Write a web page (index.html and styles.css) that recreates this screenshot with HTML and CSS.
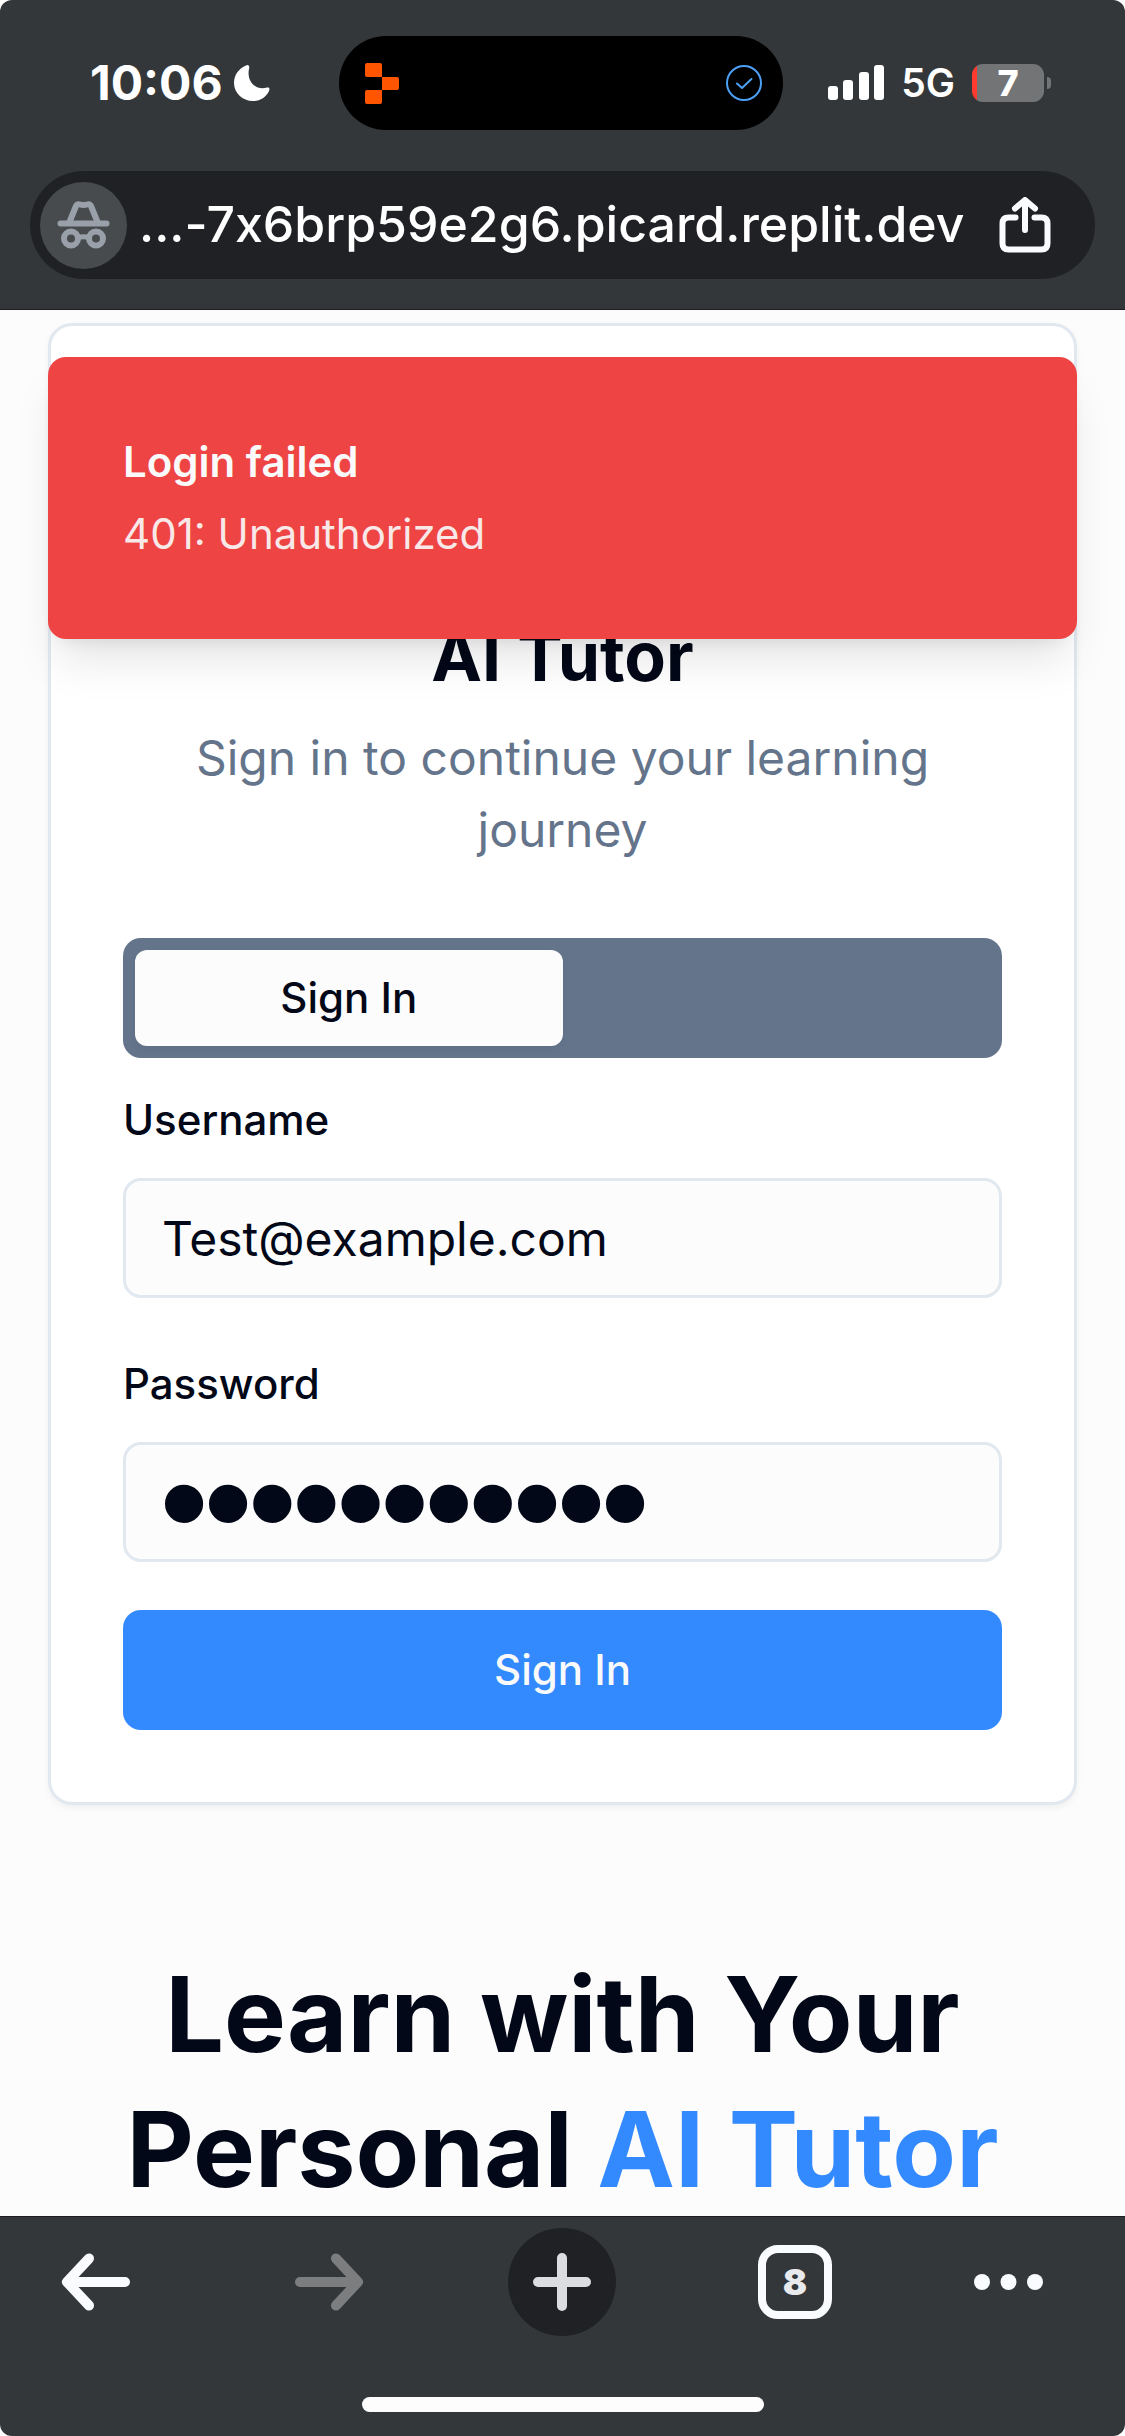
FILE: index.html
```html
<!DOCTYPE html>
<html lang="en">
<head>
  <meta charset="utf-8">
  <meta name="viewport" content="width=device-width, initial-scale=1">
  <title>AI Tutor</title>
  <link rel="stylesheet" href="styles.css">
</head>
<body>
  <header class="browser-top">
    <div class="status">
      <div class="status-left">
        <span class="clock">10:06</span>
        <svg class="moon" viewBox="0 0 36 36" aria-hidden="true"><path d="M12 .6Q14-.6 15 1.2 15.600 2 15 4C12.600 14.500 20 26 33 22.600 35.600 22 35.800 23.600 35 26 32 32.400 26 36 19 36 8.500 36 0 28 0 18 0 9.800 5 3.600 12 .6Z"/></svg>
      </div>
      <div class="island">
        <svg class="replit" viewBox="0 0 34 41" aria-hidden="true"><path d="M2 0h13q2 0 2 2v12H2q-2 0-2-2V2q0-2 2-2zM17 14h15q2 0 2 2v9q0 2-2 2H17zM2 27h15v12q0 2-2 2H2q-2 0-2-2V29q0-2 2-2z"/></svg>
        <svg class="check" viewBox="0 0 38 38" aria-hidden="true"><circle cx="19" cy="19" r="17"/><path d="M12 19.500l5 4.500 9.500-9"/></svg>
      </div>
      <div class="status-right">
        <svg class="signal" viewBox="0 0 56 36" aria-hidden="true"><rect x="0" y="21" width="10" height="14" rx="3"/><rect x="15" y="15" width="10" height="20" rx="3"/><rect x="31" y="7" width="10" height="28" rx="3"/><rect x="46" y="0" width="10" height="35" rx="3"/></svg>
        <span class="network">5G</span>
        <span class="battery">7</span>
      </div>
    </div>
    <div class="address">
      <span class="incognito">
        <svg viewBox="0 0 54 48" aria-hidden="true"><path class="hat" d="M12.500 21l6.500-16q1.200-2.500 4-1.500 3.500 1.200 7 0 2.800-1 4 1.500l6.500 16"/><path class="brim" d="M3.500 22.500h46"/><circle cx="14" cy="37.500" r="7"/><circle cx="39" cy="37.500" r="7"/><path class="bridge" d="M21 37q5.500-2.500 11 0"/></svg>
      </span>
      <input class="url" type="text" aria-label="Address" value="...-7x6brp59e2g6.picard.replit.dev">
      <button class="share" type="button" aria-label="Share">
        <svg viewBox="0 0 52 57" aria-hidden="true"><path d="M16.500 20.500H9.500Q3.500 20.500 3.500 26.500v20q0 6 6 6h33q6 0 6-6v-20q0-6-6-6h-7M26 33V5M16 11.500L26 3l10 8.500"/></svg>
      </button>
    </div>
  </header>

  <main class="page">
    <div class="toast" role="alert">
      <p class="toast-title">Login failed</p>
      <p class="toast-text">401: Unauthorized</p>
    </div>
    <section class="card">
      <h2 class="card-title">AI Tutor</h2>
      <p class="card-text">Sign in to continue your learning journey</p>
      <div class="tabs" role="tablist">
        <button class="tab tab-active" type="button" role="tab" aria-selected="true">Sign In</button>
        <button class="tab" type="button" role="tab" aria-selected="false" aria-label="Register"></button>
      </div>
      <form class="form">
        <div class="field">
          <div class="label-row"><label for="username">Username</label></div>
          <input class="input" id="username" type="text" value="Test@example.com">
        </div>
        <div class="field">
          <div class="label-row"><label for="password">Password</label></div>
          <input class="input input-password" id="password" type="password" value="abcdefghijk">
        </div>
        <button class="submit" type="button">Sign In</button>
      </form>
    </section>
    <h1 class="hero">Learn with Your Personal <span class="accent">AI Tutor</span></h1>
  </main>

  <footer class="browser-bottom">
    <nav class="toolbar" aria-label="Browser">
      <button class="tool" type="button" aria-label="Back"><svg width="70" height="58" viewBox="0 0 70 58"><path d="M28 5.500L6 29l22 23.500M64 29H8"/></svg></button>
      <button class="tool tool-off" type="button" aria-label="Forward"><svg width="70" height="58" viewBox="0 0 70 58"><path d="M42 5.500L64 29 42 52.500M6 29h56"/></svg></button>
      <button class="tool tool-new" type="button" aria-label="New tab"><svg width="58" height="58" viewBox="0 0 58 58"><path d="M29 5v48M5 29h48"/></svg></button>
      <button class="tool" type="button" aria-label="Tabs"><span class="tab-count">8</span></button>
      <button class="tool tool-more" type="button" aria-label="More"><svg width="69" height="16" viewBox="0 0 69 16"><circle cx="8" cy="8" r="8"/><circle cx="34.500" cy="8" r="8"/><circle cx="61" cy="8" r="8"/></svg></button>
    </nav>
    <div class="home-bar"></div>
  </footer>
</body>
</html>
```
FILE: styles.css
```css
* { box-sizing: border-box; margin: 0; }

html { background: #fff; }

body {
  display: flex;
  flex-direction: column;
  height: 100vh;
  overflow: hidden;
  border-radius: 12px;
  background: #fcfcfc;
  color: #020817;
  font-family: Inter, "Liberation Sans", sans-serif;
  font-size: 48px;
  line-height: 72px;
}

button, input { font: inherit; color: inherit; border: 0; padding: 0; background: none; }
svg { display: block; }

/* Browser chrome, top */
.browser-top {
  background: #343739;
  color: #fff;
  padding: 36px 30px 30px;
  border-bottom: 1px solid #1e1c20;
}
.status {
  display: grid;
  grid-template-columns: 1fr 444px 1fr;
  align-items: center;
  height: 94px;
  margin-bottom: 41px;
  padding-right: 4px;
}
.status-left { display: flex; align-items: center; gap: 11px; padding-left: 60px; }
.clock { font-size: 48px; font-weight: 700; }
.moon { width: 36px; height: 36px; fill: #fff; }
.island {
  display: flex;
  align-items: center;
  justify-content: space-between;
  height: 94px;
  padding: 0 20px 0 26px;
  border-radius: 47px;
  background: #000;
}
.replit { width: 34px; height: 41px; fill: #ff5500; }
.check { width: 38px; height: 38px; fill: none; stroke: #4ba0f5; stroke-width: 2; stroke-linecap: round; stroke-linejoin: round; }
.status-right { display: flex; align-items: center; justify-content: flex-end; gap: 17px; padding-right: 47px; }
.signal { width: 56px; height: 36px; fill: #fff; }
.network { font-size: 39px; font-weight: 600; }
.battery {
  position: relative;
  width: 72px;
  height: 38px;
  border-radius: 11px;
  background: linear-gradient(90deg, #ff3b30 5px, #737476 5px);
  font-size: 36px;
  font-weight: 800;
  line-height: 38px;
  text-align: center;
}
.battery::after {
  content: "";
  position: absolute;
  top: 13px;
  right: -7px;
  width: 4px;
  height: 12px;
  border-radius: 0 4px 4px 0;
  background: #737476;
}

.address {
  display: flex;
  align-items: center;
  height: 108px;
  padding: 0 44px 0 10px;
  border-radius: 54px;
  background: #202124;
}
.incognito {
  display: flex;
  flex: none;
  align-items: center;
  justify-content: center;
  width: 87px;
  height: 87px;
  border-radius: 50%;
  background: #474b4e;
}
.incognito svg { width: 54px; height: 48px; fill: none; stroke: #9aa0a9; stroke-width: 6; stroke-linecap: round; stroke-linejoin: round; }
.incognito .bridge { stroke-width: 5; }
.url {
  flex: 1;
  min-width: 0;
  margin-left: 12px;
  padding-bottom: 3px;
  font-size: 50px;
  font-weight: 500;
  font-variant-ligatures: no-contextual;
  outline: 0;
}
.share { flex: none; }
.share svg { width: 52px; height: 57px; fill: none; stroke: #fafbff; stroke-width: 6; stroke-linecap: round; stroke-linejoin: round; }

/* Page */
.page {
  position: relative;
  flex: 1;
  min-height: 0;
  overflow: hidden;
  padding: 13px 48px 0;
}
.toast {
  position: absolute;
  top: 47px;
  left: 48px;
  right: 48px;
  z-index: 1;
  display: grid;
  gap: 12px;
  padding: 75px;
  border-radius: 18px;
  background: #ef4444;
  color: #fafafa;
  font-size: 42px;
  line-height: 60px;
  box-shadow: 0 30px 45px -9px rgba(0, 0, 0, .1), 0 12px 18px -12px rgba(0, 0, 0, .1);
}
.toast-title { font-weight: 600; }
.toast-text { opacity: .9; }

.card {
  padding: 282px 72px 72px;
  border: 3px solid #e2e8f0;
  border-radius: 24px;
  background: #fff;
  box-shadow: 0 3px 6px rgba(0, 0, 0, .05);
}
.card-title { margin-bottom: 18px; font-size: 68px; font-weight: 700; line-height: 96px; text-align: center; }
.card-text { margin-bottom: 72px; color: #64748b; text-align: center; }

.tabs {
  display: grid;
  grid-template-columns: 1fr 1fr;
  height: 120px;
  padding: 12px;
  border-radius: 18px;
  background: #64748b;
}
.tab { border-radius: 12px; font-size: 42px; font-weight: 500; line-height: 60px; }
.tab-active { background: #fcfcfc; box-shadow: 0 3px 6px rgba(0, 0, 0, .05); }

.form { display: grid; gap: 48px; margin-top: 24px; }
.field { display: grid; gap: 24px; }
.label-row label { font-size: 42px; font-weight: 500; line-height: 1; }
.input {
  width: 100%;
  height: 120px;
  padding: 0 36px;
  border: 3px solid #e2e8f0;
  border-radius: 18px;
  background: #fcfcfc;
}
.input-password {
  font-family: "Liberation Sans", sans-serif;
  font-size: 126px;
  -webkit-text-stroke: 4px currentColor;
}
.submit { height: 120px; border-radius: 18px; background: #338aff; color: #fafafa; font-size: 42px; font-weight: 500; }

.hero { margin-top: 142px; font-size: 104px; font-weight: 700; line-height: 135px; text-align: center; }
.accent { color: #338aff; }

/* Browser chrome, bottom */
.browser-bottom {
  background: #343739;
  border-top: 1px solid #1e1c20;
  padding: 11px 0 24px;
}
.toolbar { display: flex; align-items: center; justify-content: space-between; padding: 0 82px 0 42px; }
.tool {
  display: flex;
  align-items: center;
  justify-content: center;
  width: 108px;
  height: 108px;
  border-radius: 50%;
}
.tool svg { fill: none; stroke: #fafbff; stroke-width: 10; stroke-linecap: round; stroke-linejoin: round; }
.tool-off svg { stroke: #7c7d7f; }
.tool-new { background: #202124; }
.tool-new svg { stroke: #dcdde0; }
.tool-more { width: 69px; }
.tool-more svg { fill: #fafbff; stroke: none; }
.tab-count {
  width: 74px;
  height: 74px;
  border: 8px solid #fafbff;
  border-radius: 20px;
  color: #e8eaed;
  font-size: 36px;
  font-weight: 900;
  line-height: 58px;
  text-align: center;
}
.home-bar { width: 402px; height: 15px; margin: 61px auto 0; border-radius: 8px; background: #fdfdfd; }
```
